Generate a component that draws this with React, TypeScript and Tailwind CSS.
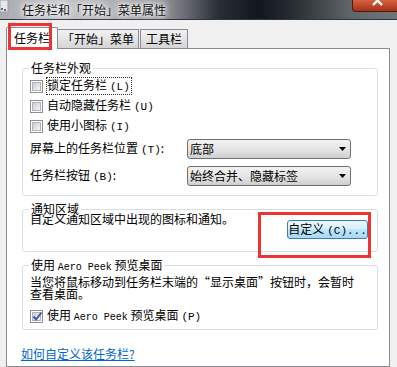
import React from "react";

const L = ({ children }: { children: React.ReactNode }) => (
  <span className="font-['Liberation_Mono',monospace] text-[10px]">{children}</span>
);

const K = ({ children }: { children: React.ReactNode }) => (
  <span className="ml-[3px] font-['Liberation_Mono',monospace] text-[11px]">{children}</span>
);

const Checkbox = ({ checked = false }: { checked?: boolean }) => (
  <div className="w-[13px] h-[13px] border border-[#8e8f8f] bg-white p-[1px] shrink-0">
    <div className="w-full h-full border border-[#aeb3b9] bg-gradient-to-br from-[#cbcfd5] to-[#f6f6f6] relative">
      {checked && (
        <svg width="11" height="11" viewBox="0 0 11 11" className="absolute -left-[1px] -top-[2px]">
          <path d="M1.5 5.5 L4 8.5 L9.5 1.5" stroke="#3d5aa8" strokeWidth="2" fill="none" />
        </svg>
      )}
    </div>
  </div>
);

const Select = ({ value }: { value: string }) => (
  <div className="w-[164px] h-[20px] border border-[#707070] rounded-[3px] bg-gradient-to-b from-[#f2f2f2] via-[#e6e6e6] to-[#cfcfcf] flex items-center justify-between pl-[2px] pr-[4px]">
    <span className="leading-none">{value}</span>
    <svg width="7" height="4" viewBox="0 0 7 4">
      <path d="M0 0 H7 L3.5 4 Z" fill="#000" />
    </svg>
  </div>
);

const Group = ({
  title,
  className,
  children,
}: {
  title: React.ReactNode;
  className: string;
  children: React.ReactNode;
}) => (
  <div className={`relative ml-[15px] w-[356px] border border-[#d5dfe5] rounded-[3px] ${className}`}>
    <div className="absolute left-[6px] -top-[7px] bg-white px-[2px] leading-[12px] whitespace-nowrap">
      {title}
    </div>
    {children}
  </div>
);

export default function App() {
  return (
    <div className="relative w-[397px] h-[367px] overflow-hidden bg-[#f0f0f0] text-[12px] text-black font-['Noto_Sans_CJK_SC',sans-serif] flex flex-col">
      {/* title bar */}
      <div className="h-[20px] shrink-0 border-b border-[#30353b] bg-[linear-gradient(90deg,#a7abb0_0%,#c4c7ca_15%,#9a9ea3_40%,#2a2e35_55%,#12161d_65%,#2c3136_75%,#5f6468_88%,#70757a_100%)] flex items-start relative">
        <svg width="9" height="14" viewBox="0 0 9 14">
          <rect x="0" y="0" width="8" height="12" fill="#e6e8ea" />
          <rect x="0" y="0" width="8" height="12" fill="none" stroke="#9aa0a6" strokeWidth="1" />
          <rect x="1" y="8" width="2" height="2" fill="#3b6fd6" />
          <rect x="4" y="9" width="2" height="2" fill="#d23a3a" />
        </svg>
        <div className="ml-[13px] mt-[2px] leading-[15px] text-[12px] text-[#111] [text-shadow:0_0_6px_#fff,0_0_10px_#fff,0_0_3px_#fff]">
          任务栏和「开始」菜单属性
        </div>
        <div className="absolute left-[352px] top-0 w-[50px] h-[12px] rounded-bl-[4px] border border-t-0 border-[#4a1b12] bg-gradient-to-b from-[#d8613f] to-[#a6301a] overflow-hidden">
          <svg width="14" height="10" viewBox="0 0 14 10" className="absolute left-[18px] top-0">
            <path d="M2 -4 L11 5 M11 -4 L2 5" stroke="#fff" strokeWidth="2.4" />
          </svg>
        </div>
      </div>

      {/* tabs */}
      <div className="h-[28px] shrink-0 flex items-end pl-[6px]">
        <div className="relative z-10 w-[52px] h-[22px] -mb-[1px] bg-white border border-b-0 border-[#898c95] rounded-t-[2px] flex items-start justify-center pt-[3px]">
          <span className="leading-[14px]">任务栏</span>
        </div>
        <div className="w-[81px] h-[19px] bg-gradient-to-b from-[#f2f2f2] to-[#d5d5d5] border-t border-r border-[#898c95] flex items-center justify-center">
          <span className="leading-[14px]">「开始」菜单</span>
        </div>
        <div className="w-[48px] h-[19px] bg-gradient-to-b from-[#f2f2f2] to-[#d5d5d5] border-t border-r border-l border-[#898c95] ml-[1px] flex items-center justify-center">
          <span className="leading-[14px]">工具栏</span>
        </div>
      </div>

      {/* panel */}
      <div className="ml-[6px] w-[384px] flex-1 bg-white border border-[#898c95] flex flex-col">
        <Group title="任务栏外观" className="mt-[19px] h-[128px] pt-[7px]">
          <div className="h-[20px] flex items-center pl-[7px] gap-[3px]">
            <Checkbox />
            <span className="leading-[13px] border border-dotted border-[#333] pr-[1px]">
              锁定任务栏<K>(L)</K>
            </span>
          </div>
          <div className="h-[20px] flex items-center pl-[7px] gap-[4px]">
            <Checkbox />
            <span>
              自动隐藏任务栏<K>(U)</K>
            </span>
          </div>
          <div className="h-[20px] flex items-center pl-[7px] gap-[4px]">
            <Checkbox />
            <span>
              使用小图标<K>(I)</K>
            </span>
          </div>
          <div className="mt-[3px] h-[20px] flex items-center justify-between pl-[7px] pr-[26px]">
            <span>
              屏幕上的任务栏位置<K>(T)</K>:
            </span>
            <Select value="底部" />
          </div>
          <div className="mt-[7px] h-[20px] flex items-center justify-between pl-[7px] pr-[26px]">
            <span>
              任务栏按钮<K>(B)</K>:
            </span>
            <Select value="始终合并、隐藏标签" />
          </div>
        </Group>

        <Group title="通知区域" className="mt-[13px] h-[43px] flex justify-between pl-[7px] pr-[9px]">
          <span className="mt-[3px] leading-[12px]">自定义通知区域中出现的图标和通知。</span>
          <div className="mt-[10px] w-[81px] h-[19px] rounded-[3px] border border-[#3c7fb1] bg-[linear-gradient(180deg,#eaf6fd_0%,#d9f0fc_45%,#bee6fd_50%,#a7d9f5_100%)] flex items-center justify-center">
            <span className="leading-none">
              自定义<K>(C)...</K>
            </span>
          </div>
        </Group>

        <Group
          title={
            <span>
              使用 <L>Aero Peek</L> 预览桌面
            </span>
          }
          className="mt-[13px] h-[65px] pl-[7px] pt-[10px]"
        >
          <div className="leading-[12px]">
            当您将鼠标移动到任务栏末端的“显示桌面”按钮时，会暂时
            <br />
            查看桌面。
          </div>
          <div className="mt-[8px] flex items-center gap-[4px]">
            <Checkbox checked />
            <span className="leading-[13px]">
              使用 <L>Aero Peek</L> 预览桌面<K>(P)</K>
            </span>
          </div>
        </Group>

        <div className="mt-[17px] ml-[14px] leading-[14px] text-[#0066cc] underline">如何自定义该任务栏?</div>
      </div>

      {/* red annotation boxes */}
      <div className="absolute left-[8px] top-[23px] w-[44px] h-[27px] border-[3px] border-[#ee3333] z-20 pointer-events-none" />
      <div className="absolute left-[258px] top-[212px] w-[113px] h-[46px] border-[3px] border-[#ee3333] z-20 pointer-events-none" />
    </div>
  );
}
